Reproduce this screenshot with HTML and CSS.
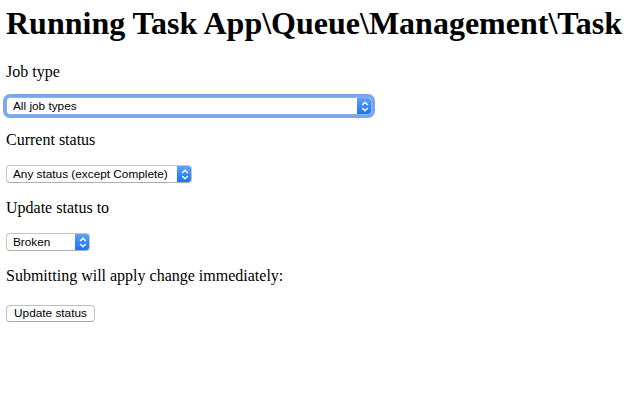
FILE: index.html
```html
<!DOCTYPE html>
<html>
<head>
<meta charset="utf-8">
<title>Running Task</title>
<link rel="stylesheet" href="styles.css">
</head>
<body>
<form class="page">
  <h1 class="title">Running Task App\Queue\Management\Task</h1>
  <p class="label">Job type</p>
  <div class="field">
    <div class="select select-wide focused">
      <span class="select-text">All job types</span>
      <span class="select-btn"><svg width="8" height="11" viewBox="0 0 8 11"><path d="M1.2 4 L4 1.3 L6.8 4 M1.2 7 L4 9.7 L6.8 7" fill="none" stroke="#fff" stroke-width="1.4"/></svg></span>
    </div>
  </div>
  <p class="label">Current status</p>
  <div class="field">
    <div class="select select-mid">
      <span class="select-text">Any status (except Complete)</span>
      <span class="select-btn"><svg width="8" height="11" viewBox="0 0 8 11"><path d="M1.2 4 L4 1.3 L6.8 4 M1.2 7 L4 9.7 L6.8 7" fill="none" stroke="#fff" stroke-width="1.4"/></svg></span>
    </div>
  </div>
  <p class="label">Update status to</p>
  <div class="field">
    <div class="select select-small">
      <span class="select-text">Broken</span>
      <span class="select-btn"><svg width="8" height="11" viewBox="0 0 8 11"><path d="M1.2 4 L4 1.3 L6.8 4 M1.2 7 L4 9.7 L6.8 7" fill="none" stroke="#fff" stroke-width="1.4"/></svg></span>
    </div>
  </div>
  <p class="label">Submitting will apply change immediately:</p>
  <div class="field">
    <button type="button" class="btn">Update status</button>
  </div>
</form>
</body>
</html>
```
FILE: styles.css
```css
html, body {
  margin: 0;
  padding: 0;
  background: #fff;
}
body {
  font-family: "Liberation Serif", "Times New Roman", serif;
  color: #000;
}
.page {
  padding: 5px 6px;
  display: flex;
  flex-direction: column;
  align-items: flex-start;
}
.title {
  font-size: 32px;
  font-weight: bold;
  margin: 0 0 21.4px 0;
  line-height: normal;
}
.label {
  font-size: 16px;
  line-height: normal;
  margin: 0 0 16px 0;
}
.field {
  margin: 0 0 16px 0;
  display: flex;
}
.select {
  display: flex;
  height: 18px;
  box-sizing: border-box;
  border: 1px solid #c4c4c4;
  border-bottom-color: #b0b0b0;
  border-radius: 4px;
  background: #fff;
  font-family: "Liberation Sans", Arial, sans-serif;
  font-size: 11.8px;
  overflow: hidden;
}
.focused {
  box-shadow: 0 0 0 3px #7ba6ee;
  border-color: #8db2f0;
}
.select-text {
  flex: 1;
  padding-left: 6px;
  line-height: 16px;
  white-space: nowrap;
}
.select-btn {
  width: 15px;
  display: flex;
  align-items: center;
  justify-content: center;
  background: linear-gradient(#5fa6fb, #1a6ff5);
  margin: -1px -1px -1px 0;
}
.select-wide { width: 366px; }
.select-mid { width: 186px; }
.select-small { width: 84px; }
.btn {
  font-family: "Liberation Sans", Arial, sans-serif;
  font-size: 11.8px;
  height: 17px;
  width: 89px;
  margin-top: 4px;
  padding: 0;
  background: #fff;
  border: 1px solid #c0c0c0;
  border-bottom-color: #aaa;
  border-radius: 4px;
  color: #000;
  line-height: 15px;
}
```
